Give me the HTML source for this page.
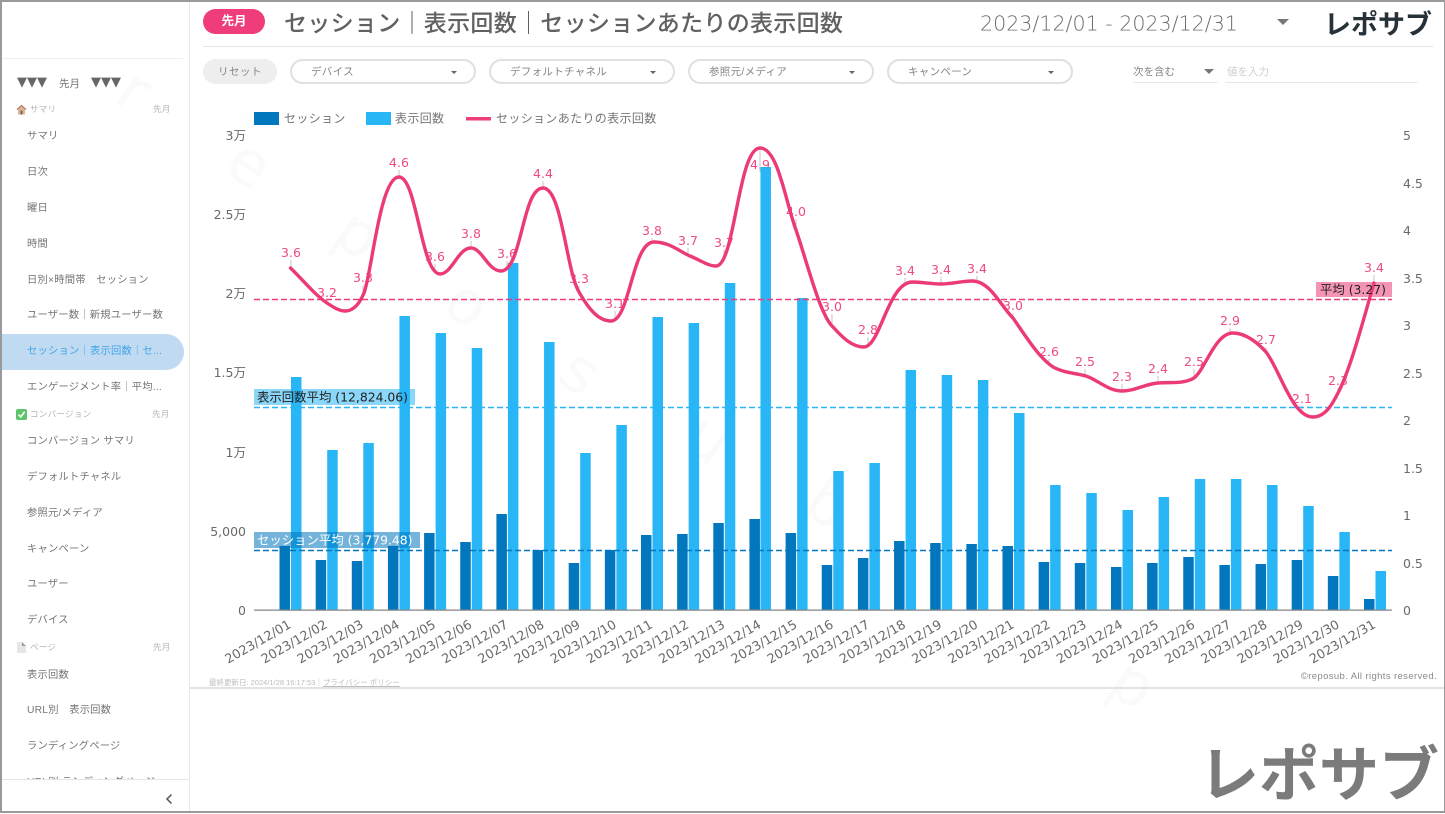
<!DOCTYPE html>
<html lang="ja"><head><meta charset="utf-8"><title>レポサブ</title>
<style>
*{box-sizing:border-box}
html,body{margin:0;padding:0;background:#fff}
body{width:1445px;height:813px;overflow:hidden;position:relative;font-family:"Liberation Sans","Noto Sans CJK JP",sans-serif;color:#757575}
.a{position:absolute;white-space:nowrap}
.frame{position:absolute;left:0;top:0;width:1445px;height:813px;border:solid #9a9a9a;border-width:2px 1px 2px 2px;pointer-events:none;z-index:9}
.it{position:absolute;left:27px;font-size:10.3px;line-height:20px;height:20px;letter-spacing:.2px;color:#757575;white-space:nowrap}
.hd{position:absolute;font-size:8.5px;line-height:12px;color:#b5b5b5;white-space:nowrap;letter-spacing:.3px}
.sel{position:absolute;top:59px;width:186px;height:25px;border:2px solid #e0e0e0;border-radius:13px;background:#fff;font-size:10.5px;line-height:23px;padding-left:19px;color:#858585;letter-spacing:.3px}
.sel:after{content:"";position:absolute;right:17px;top:10px;border:3px solid transparent;border-top:3px solid #666;border-bottom:0}
svg text{font-family:"DejaVu Sans","Noto Sans CJK JP",sans-serif}
</style></head><body>

<!-- sidebar -->
<div class="a" style="left:189px;top:0;width:1px;height:813px;background:#e8e8e8"></div>
<div class="a" style="left:3px;top:58px;width:180px;height:1px;background:#eee"></div>
<div class="a" style="left:17px;top:74px;font:13px/18px 'DejaVu Sans',sans-serif;color:#666;letter-spacing:0">▼▼▼</div>
<div class="a" style="left:59px;top:75px;font-size:10.5px;line-height:18px;color:#757575">先月</div>
<div class="a" style="left:91px;top:74px;font:13px/18px 'DejaVu Sans',sans-serif;color:#666">▼▼▼</div>

<svg class="a" style="left:16px;top:104px" width="11" height="11" viewBox="0 0 11 11"><path d="M5.5 1 0.5 5.5H2V10.5H9V5.5H10.5Z" fill="#d8b89a"/><path d="M5.5.8 .5 5.3 1.3 6 5.5 2.3 9.7 6 10.5 5.3Z" fill="#c0705a"/><rect x="4.4" y="6.5" width="2.2" height="4" fill="#8a6a50"/></svg>
<div class="hd" style="left:30px;top:103px">サマリ</div>
<div class="hd" style="left:153px;top:103px">先月</div>
<div class="it" style="top:127px">サマリ</div>
<div class="it" style="top:163px">日次</div>
<div class="it" style="top:199px">曜日</div>
<div class="it" style="top:235px">時間</div>
<div class="it" style="top:271px">日別×時間帯　セッション</div>
<div class="it" style="top:306px">ユーザー数｜新規ユーザー数</div>
<div class="a" style="left:2px;top:334px;width:182px;height:36px;background:#bfdaf1;border-radius:0 18px 18px 0"></div>
<div class="it" style="top:342px;color:#42a5ea">セッション｜表示回数｜セ...</div>
<div class="it" style="top:378px">エンゲージメント率｜平均...</div>
<svg class="a" style="left:16px;top:409px" width="11" height="11" viewBox="0 0 11 11"><rect width="11" height="11" rx="2" fill="#5cc46a"/><path d="M2.5 5.5 4.7 8 8.7 2.8" fill="none" stroke="#fff" stroke-width="1.6"/></svg>
<div class="hd" style="left:30px;top:408px">コンバージョン</div>
<div class="hd" style="left:152px;top:408px">先月</div>
<div class="it" style="top:432px">コンバージョン サマリ</div>
<div class="it" style="top:468px">デフォルトチャネル</div>
<div class="it" style="top:504px">参照元/メディア</div>
<div class="it" style="top:540px">キャンペーン</div>
<div class="it" style="top:575px">ユーザー</div>
<div class="it" style="top:611px">デバイス</div>
<svg class="a" style="left:17px;top:642px" width="9" height="11" viewBox="0 0 9 11"><path d="M0 0H5L9 4V11H0Z" fill="#e6e6e6"/><path d="M5 0 9 4H5Z" fill="#999"/></svg>
<div class="hd" style="left:30px;top:641px">ページ</div>
<div class="hd" style="left:153px;top:641px">先月</div>
<div class="it" style="top:666px">表示回数</div>
<div class="it" style="top:701px">URL別　表示回数</div>
<div class="it" style="top:737px">ランディングページ</div>
<div class="a" style="left:2px;top:770px;width:187px;height:9px;overflow:hidden"><div class="it" style="left:25px;top:3px">URL別 ランディングページ</div></div>
<div class="a" style="left:2px;top:779px;width:187px;height:1px;background:#e5e5e5"></div>
<svg class="a" style="left:164px;top:793px" width="10" height="12" viewBox="0 0 10 12"><path d="M7.5 1.5 3 6 7.5 10.5" fill="none" stroke="#555" stroke-width="1.5"/></svg>

<!-- header -->
<div class="a" style="left:203px;top:9px;width:62px;height:25px;border-radius:13px;background:#ee3d7a;color:#fff;font-size:12.5px;line-height:25px;text-align:center;font-weight:700">先月</div>
<div class="a" style="left:284px;top:4px;font-size:23px;line-height:34px;font-weight:500;color:#616161;font-family:'Noto Sans CJK JP',sans-serif;letter-spacing:.3px">セッション｜表示回数｜セッションあたりの表示回数</div>
<svg class="a" style="left:975px;top:5px" width="270" height="36"><text x="5" y="25.500" font-size="20.600" fill="#6e6e6e" style="font-family:'DejaVu Sans ExtraLight','DejaVu Sans',sans-serif;font-weight:200">2023/12/01 - 2023/12/31</text></svg>
<div class="a" style="left:1277px;top:19px;border:6px solid transparent;border-top:6px solid #777;border-bottom:0"></div>
<div class="a" style="left:1324px;top:3px;font-size:27px;line-height:40px;font-weight:700;color:#263238;font-family:'Noto Sans CJK JP',sans-serif">レポサブ</div>
<div class="a" style="left:203px;top:46px;width:1230px;height:1px;background:#e4e4e4"></div>

<!-- filters -->
<div class="a" style="left:203px;top:59px;width:74px;height:25px;border-radius:13px;background:#eee;font-size:10.5px;line-height:27px;text-align:center;color:#858585;letter-spacing:.5px">リセット</div>
<div class="sel" style="left:290px">デバイス</div>
<div class="sel" style="left:489px">デフォルトチャネル</div>
<div class="sel" style="left:688px">参照元/メディア</div>
<div class="sel" style="left:887px">キャンペーン</div>
<div class="a" style="left:1133px;top:64px;font-size:10.5px;line-height:16px;color:#858585">次を含む</div>
<div class="a" style="left:1204px;top:69px;border:5px solid transparent;border-top:5px solid #777;border-bottom:0"></div>
<div class="a" style="left:1133px;top:82px;width:85px;height:1px;background:#e8e8e8"></div>
<div class="a" style="left:1227px;top:64px;font-size:10.5px;line-height:16px;color:#cfcfcf">値を入力</div>
<div class="a" style="left:1225px;top:82px;width:193px;height:1px;background:#e8e8e8"></div>

<!-- chart -->
<svg class="a" style="left:0;top:0" width="1445" height="813" viewBox="0 0 1445 813">
<g fill="#fafafa" font-size="62">
<text transform="translate(112 100) rotate(35)">r</text>
<text transform="translate(222 170) rotate(35)">e</text>
<text transform="translate(330 240) rotate(35)">p</text>
<text transform="translate(440 310) rotate(35)">o</text>
<text transform="translate(555 380) rotate(35)">s</text>
<text transform="translate(680 445) rotate(35)">u</text>
<text transform="translate(800 510) rotate(35)">b</text>
<text transform="translate(1105 690) rotate(35)">p</text>
</g>

<!-- legend -->
<rect x="254" y="112" width="25" height="13" fill="#0277bd"/>
<rect x="366" y="112" width="25" height="13" fill="#29b6f6"/>
<rect x="466" y="117" width="25" height="3.500" fill="#ee3d7a"/>
<g font-size="12" fill="#757575" style="letter-spacing:.35px">
<text x="284" y="122.500">セッション</text><text x="395" y="122.500">表示回数</text><text x="496" y="122.500">セッションあたりの表示回数</text>
</g>

<!-- axis labels -->
<g font-size="12.500" fill="#6a6a6a" text-anchor="end">
<text x="246" y="140">3万</text><text x="246" y="219">2.5万</text><text x="246" y="298">2万</text><text x="246" y="377">1.5万</text><text x="246" y="457">1万</text><text x="246" y="536">5,000</text><text x="246" y="615">0</text>
</g>
<g font-size="12.500" fill="#6a6a6a">
<text x="1403" y="140">5</text><text x="1403" y="188">4.5</text><text x="1403" y="235">4</text><text x="1403" y="283">3.5</text><text x="1403" y="330">3</text><text x="1403" y="378">2.5</text><text x="1403" y="425">2</text><text x="1403" y="473">1.5</text><text x="1403" y="520">1</text><text x="1403" y="568">0.5</text><text x="1403" y="615">0</text>
</g>

<!-- value labels -->
<g font-size="12.500" fill="#ee4a84" text-anchor="middle">
<text x="291" y="257">3.6</text><text x="327" y="297">3.2</text><text x="363" y="282">3.3</text><text x="399" y="167">4.6</text><text x="435" y="261">3.6</text><text x="471" y="238">3.8</text><text x="507" y="258">3.6</text><text x="543" y="178">4.4</text><text x="579" y="283">3.3</text><text x="615" y="308">3.1</text><text x="652" y="235">3.8</text><text x="688" y="245">3.7</text><text x="724" y="247">3.7</text><text x="760" y="169">4.9</text><text x="796" y="216">4.0</text><text x="832" y="311">3.0</text><text x="868" y="334">2.8</text><text x="905" y="275">3.4</text><text x="941" y="274">3.4</text><text x="977" y="273">3.4</text><text x="1013" y="310">3.0</text><text x="1049" y="356">2.6</text><text x="1085" y="366">2.5</text><text x="1122" y="381">2.3</text><text x="1158" y="373">2.4</text><text x="1194" y="366">2.5</text><text x="1230" y="325">2.9</text><text x="1266" y="344">2.7</text><text x="1302" y="403">2.1</text><text x="1338" y="385">2.3</text><text x="1374" y="272">3.4</text>
</g>
<g stroke="#c4c4c4" stroke-width="1">
<path d="M291 260V268M327 300V304M363 285V296M399 170V177M435 264V273M471 241V248M507 261V270M543 181V188M579 286V292M615 311V318M652 238V243M688 248V255M724 250V262M760 172V149M796 219V230M832 314V327M868 337V347M905 278V283M941 277V284M977 276V281M1013 313V318M1049 359V365M1085 369V374M1122 384V391M1158 376V383M1194 369V377M1230 328V334M1266 347V353M1302 406V413M1338 388V395M1374 275V284"/>
</g>

<!-- light bars -->
<g fill="#29b6f6">
<rect x="291" y="377" width="10.500" height="233"/><rect x="327.200" y="450" width="10.500" height="160"/><rect x="363.300" y="443" width="10.500" height="167"/><rect x="399.450" y="316" width="10.500" height="294"/><rect x="435.600" y="333" width="10.500" height="277"/><rect x="471.750" y="348" width="10.500" height="262"/><rect x="507.900" y="263" width="10.500" height="347"/><rect x="544.050" y="342" width="10.500" height="268"/><rect x="580.200" y="453" width="10.500" height="157"/><rect x="616.350" y="425" width="10.500" height="185"/><rect x="652.500" y="317" width="10.500" height="293"/><rect x="688.650" y="323" width="10.500" height="287"/><rect x="724.800" y="283" width="10.500" height="327"/><rect x="760.450" y="167" width="10.500" height="443"/><rect x="797.100" y="298" width="10.500" height="312"/><rect x="833.250" y="471" width="10.500" height="139"/><rect x="869.400" y="463" width="10.500" height="147"/><rect x="905.550" y="370" width="10.500" height="240"/><rect x="941.700" y="375" width="10.500" height="235"/><rect x="977.850" y="380" width="10.500" height="230"/><rect x="1014" y="413" width="10.500" height="197"/><rect x="1050.150" y="485" width="10.500" height="125"/><rect x="1086.300" y="493" width="10.500" height="117"/><rect x="1122.500" y="510" width="10.500" height="100"/><rect x="1158.600" y="497" width="10.500" height="113"/><rect x="1194.750" y="479" width="10.500" height="131"/><rect x="1230.900" y="479" width="10.500" height="131"/><rect x="1267.050" y="485" width="10.500" height="125"/><rect x="1303.200" y="506" width="10.500" height="104"/><rect x="1339.350" y="532" width="10.500" height="78"/><rect x="1375.500" y="571" width="10.500" height="39"/>
</g>
<!-- dark bars -->
<g fill="#0277bd">
<rect x="279.500" y="546" width="10.500" height="64"/><rect x="315.700" y="560" width="10.500" height="50"/><rect x="351.800" y="561" width="10.500" height="49"/><rect x="387.950" y="546" width="10.500" height="64"/><rect x="424.100" y="533" width="10.500" height="77"/><rect x="460.250" y="542" width="10.500" height="68"/><rect x="496.400" y="514" width="10.500" height="96"/><rect x="532.550" y="550" width="10.500" height="60"/><rect x="568.700" y="563" width="10.500" height="47"/><rect x="604.850" y="550" width="10.500" height="60"/><rect x="641" y="535" width="10.500" height="75"/><rect x="677.150" y="534" width="10.500" height="76"/><rect x="713.300" y="523" width="10.500" height="87"/><rect x="749.450" y="519" width="10.500" height="91"/><rect x="785.600" y="533" width="10.500" height="77"/><rect x="821.750" y="565" width="10.500" height="45"/><rect x="857.900" y="558" width="10.500" height="52"/><rect x="894.050" y="541" width="10.500" height="69"/><rect x="930.200" y="543" width="10.500" height="67"/><rect x="966.350" y="544" width="10.500" height="66"/><rect x="1002.500" y="546" width="10.500" height="64"/><rect x="1038.650" y="562" width="10.500" height="48"/><rect x="1074.800" y="563" width="10.500" height="47"/><rect x="1111" y="567" width="10.500" height="43"/><rect x="1147.100" y="563" width="10.500" height="47"/><rect x="1183.250" y="557" width="10.500" height="53"/><rect x="1219.400" y="565" width="10.500" height="45"/><rect x="1255.550" y="564" width="10.500" height="46"/><rect x="1291.700" y="560" width="10.500" height="50"/><rect x="1327.850" y="576" width="10.500" height="34"/><rect x="1364" y="599" width="10.500" height="11"/>
</g>

<rect x="254" y="609.500" width="1138" height="1.300" fill="#8a8a8a"/>

<!-- average lines and labels -->
<g stroke-width="1.500" stroke-dasharray="6 3" fill="none">
<path d="M254 299.500H1392" stroke="#ee3d7a"/>
<path d="M254 407.500H1392" stroke="#29b6f6"/>
<path d="M254 550.500H1392" stroke="#0277bd"/>
</g>
<rect x="254" y="389" width="161" height="16" fill="#29b6f6" fill-opacity=".55"/>
<text x="257" y="401.500" font-size="12.400" fill="#222">表示回数平均 (12,824.06)</text>
<rect x="254" y="532" width="166" height="16" fill="#0277bd" fill-opacity=".55"/>
<text x="257" y="544.500" font-size="12.400" fill="#fff">セッション平均 (3,779.48)</text>

<!-- curve -->
<path fill="none" stroke="#ec3a78" stroke-width="3.400" stroke-linecap="round" stroke-linejoin="round" d="M290.500 268C303 280 315 295 327 303C333 307 339 311 345 311C353 311 359 305 364 293C372 272 380 177 399 177C417 177 421 274 440 274C452 274 458 248 471 248C482 248 488 271 501 271C522 271 522 188 543 188C562 188 566 270 579 292C588 308 598 321 611 321C630 321 632 242 654 242C670 242 680 252 690 256C700 260 708 266 716 266C735 266 738 148 760 148C778 148 785 200 796 230C808 265 820 315 833 327C843 338 852 347 864 347C880 347 888 283 912 282C922 282 932 284 941 284C952 284 962 281 972 281C990 281 1000 305 1013 318C1025 335 1040 360 1055 368C1065 373 1075 373 1086 376C1098 380 1108 391 1122 391C1135 391 1145 384 1158 383C1172 382 1184 384 1194 378C1205 370 1215 333 1233 333C1245 333 1257 342 1266 352C1280 370 1292 417 1313 417C1325 417 1332 405 1338 393C1350 370 1362 325 1374 283"/>
<rect x="1316" y="282" width="76" height="15" fill="#ee3d7a" fill-opacity=".55"/>
<text x="1320" y="294" font-size="12.400" fill="#222">平均 (3.27)</text>

<!-- date labels -->
<g font-size="12.800" fill="#6a6a6a" text-anchor="end">
<text transform="translate(292 627) rotate(-30)">2023/12/01</text>
<text transform="translate(328.200 627) rotate(-30)">2023/12/02</text>
<text transform="translate(364.300 627) rotate(-30)">2023/12/03</text>
<text transform="translate(400.450 627) rotate(-30)">2023/12/04</text>
<text transform="translate(436.600 627) rotate(-30)">2023/12/05</text>
<text transform="translate(472.750 627) rotate(-30)">2023/12/06</text>
<text transform="translate(508.900 627) rotate(-30)">2023/12/07</text>
<text transform="translate(545.050 627) rotate(-30)">2023/12/08</text>
<text transform="translate(581.200 627) rotate(-30)">2023/12/09</text>
<text transform="translate(617.350 627) rotate(-30)">2023/12/10</text>
<text transform="translate(653.500 627) rotate(-30)">2023/12/11</text>
<text transform="translate(689.650 627) rotate(-30)">2023/12/12</text>
<text transform="translate(725.800 627) rotate(-30)">2023/12/13</text>
<text transform="translate(761.950 627) rotate(-30)">2023/12/14</text>
<text transform="translate(798.100 627) rotate(-30)">2023/12/15</text>
<text transform="translate(834.250 627) rotate(-30)">2023/12/16</text>
<text transform="translate(870.400 627) rotate(-30)">2023/12/17</text>
<text transform="translate(906.550 627) rotate(-30)">2023/12/18</text>
<text transform="translate(942.700 627) rotate(-30)">2023/12/19</text>
<text transform="translate(978.850 627) rotate(-30)">2023/12/20</text>
<text transform="translate(1015 627) rotate(-30)">2023/12/21</text>
<text transform="translate(1051.150 627) rotate(-30)">2023/12/22</text>
<text transform="translate(1087.300 627) rotate(-30)">2023/12/23</text>
<text transform="translate(1123.500 627) rotate(-30)">2023/12/24</text>
<text transform="translate(1159.600 627) rotate(-30)">2023/12/25</text>
<text transform="translate(1195.750 627) rotate(-30)">2023/12/26</text>
<text transform="translate(1231.900 627) rotate(-30)">2023/12/27</text>
<text transform="translate(1268.050 627) rotate(-30)">2023/12/28</text>
<text transform="translate(1304.200 627) rotate(-30)">2023/12/29</text>
<text transform="translate(1340.350 627) rotate(-30)">2023/12/30</text>
<text transform="translate(1376.500 627) rotate(-30)">2023/12/31</text>
</g>
</svg>

<!-- footer -->
<div class="a" style="left:209px;top:677px;font-size:7.5px;line-height:11px;color:#bdbdbd">最終更新日: 2024/1/28 16:17:53｜<span style="text-decoration:underline">プライバシー ポリシー</span></div>
<div class="a" style="right:8px;top:670px;font-size:9.5px;line-height:13px;color:#8a8a8a;letter-spacing:.38px">©reposub. All rights reserved.</div>
<div class="a" style="left:190px;top:687px;width:1255px;height:2px;background:#e2e2e2"></div>
<div class="a" style="left:1199px;top:729px;font-size:60px;line-height:84px;font-weight:700;color:#7b7b7b;font-family:'Noto Sans CJK JP',sans-serif">レポサブ</div>

<div class="frame"></div>
</body></html>
